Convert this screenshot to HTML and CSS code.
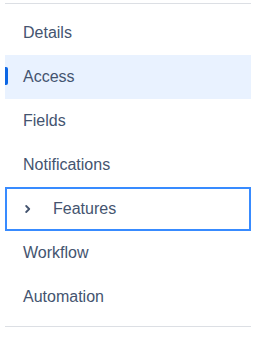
FILE: index.html
```html
<!DOCTYPE html>
<html>
<head>
<meta charset="utf-8">
<link rel="stylesheet" href="styles.css">
</head>
<body>
<nav class="nav">
  <a class="item">Details</a>
  <a class="item active">Access</a>
  <a class="item">Fields</a>
  <a class="item">Notifications</a>
  <a class="item focused">
    <svg class="chev" width="6" height="8" viewBox="0 0 6 8"><path d="M1.2 1 L4.2 4 L1.2 7" fill="none" stroke="#44546f" stroke-width="1.8" stroke-linecap="round" stroke-linejoin="round"/></svg>
    <span>Features</span>
  </a>
  <a class="item">Workflow</a>
  <a class="item">Automation</a>
</nav>
</body>
</html>
```
FILE: styles.css
```css
html, body {
  margin: 0;
  padding: 0;
  background: #fff;
}
body {
  padding: 3px 5px 0 5px;
  font-family: "Liberation Sans", Arial, sans-serif;
}
.nav {
  width: 246px;
  border-top: 1px solid #dcdfe4;
  border-bottom: 1px solid #dcdfe4;
  padding: 7px 0;
  display: flex;
  flex-direction: column;
}
.item {
  position: relative;
  height: 44px;
  display: flex;
  align-items: center;
  padding-left: 18px;
  font-size: 16px;
  color: #44546f;
  box-sizing: border-box;
}
.item.active {
  background: #e9f2ff;
}
.item.active::before {
  content: "";
  position: absolute;
  left: 0;
  top: 12px;
  width: 3px;
  height: 18px;
  background: #0c66e4;
  border-radius: 0 2px 2px 0;
}
.item.focused {
  border: 2px solid #388bff;
  padding-left: 18px;
}
.chev {
  display: block;
  margin-right: 22px;
}
```
